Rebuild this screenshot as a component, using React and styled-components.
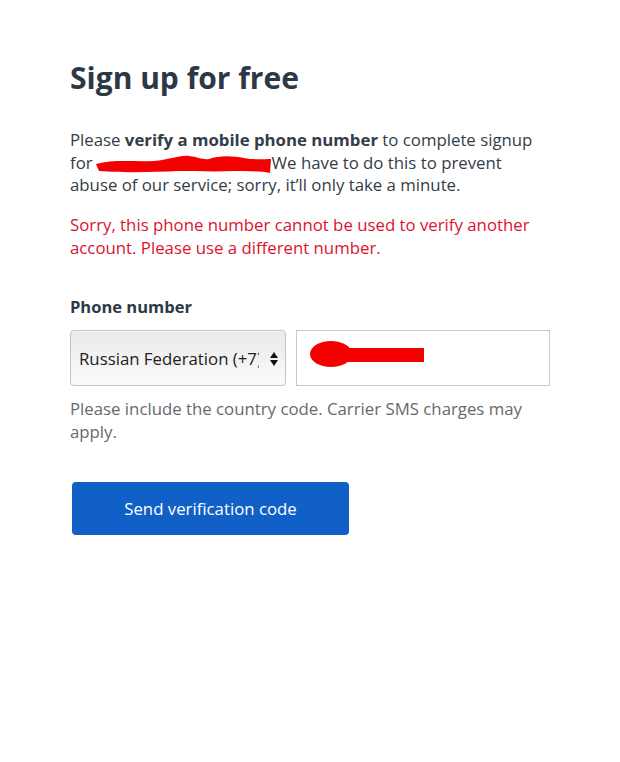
import React from 'react'
import styled, { createGlobalStyle } from 'styled-components'

const GlobalStyle = createGlobalStyle`
  body {
    margin: 0;
    background: #ffffff;
    font-family: "Open Sans", Lato, "Liberation Sans", sans-serif;
  }
`

const Page = styled.main`
  padding: 58px 70px 0 70px;
  width: 480px;
  color: #333d47;
`

const Title = styled.h1`
  margin: 0 0 31px 0;
  font-size: 30px;
  line-height: 40px;
  font-weight: 700;
  color: #2d3847;
`

const Text = styled.p`
  margin: 0 0 17.5px 0;
  font-size: 16.8px;
  line-height: 22.5px;
  color: ${({ $tone }) => ($tone === 'error' ? '#dc1230' : $tone === 'hint' ? '#66696d' : '#333d47')};
`

const Label = styled.label`
  display: block;
  margin-top: 36px;
  font-size: 16.5px;
  font-weight: 700;
  color: #2d3847;
`

const Row = styled.div`
  display: flex;
  gap: 10px;
  margin-top: 12px;
  margin-bottom: 12px;
`

const SelectBox = styled.div`
  position: relative;
  width: 216px;
  height: 56px;
  box-sizing: border-box;
  border: 1px solid #c4c4c4;
  border-radius: 4px;
  background: linear-gradient(#e9e9e9, #fbfbfb);
  box-shadow: inset 0 1px 0 #f4f4f4;
  overflow: hidden;
`

const Select = styled.select`
  appearance: none;
  border: none;
  background: transparent;
  width: 100%;
  height: 100%;
  padding: 0 26px 0 8px;
  font-family: inherit;
  font-size: 16.8px;
  color: #222;
`

const Arrows = styled.svg`
  position: absolute;
  right: 6px;
  top: 19px;
  pointer-events: none;
`

const PhoneBox = styled.div`
  position: relative;
  width: 254px;
  height: 56px;
  box-sizing: border-box;
  border: 1px solid #c8c8c8;
  background: #fff;
`

const PhoneInput = styled.input`
  border: none;
  width: 100%;
  height: 100%;
  box-sizing: border-box;
  padding: 0 12px;
  font-family: inherit;
  font-size: 16.8px;
  outline: none;
  background: transparent;
`

const Scribble = styled.svg`
  position: absolute;
  left: 12px;
  top: 8px;
  pointer-events: none;
`

const InlineScribble = styled.svg`
  display: inline-block;
  vertical-align: -5px;
  margin-left: 1px;
`

const Button = styled.button`
  margin-top: 21px;
  margin-left: 2px;
  width: 277px;
  height: 53px;
  border: none;
  border-radius: 4px;
  background: #1160c7;
  color: #fff;
  font-family: inherit;
  font-size: 16.8px;
`

export default function App() {
  return (
    <>
      <GlobalStyle />
      <Page>
        <Title>Sign up for free</Title>
        <Text>
          Please <strong>verify a mobile phone number</strong> to complete signup for
          <InlineScribble width="178" height="20" viewBox="0 0 178 20">
            <path d="M2 10 C20 5 40 8 60 7 C75 6 85 1 95 2 C105 3 108 6 115 5 C125 1 140 2 150 4 C160 6 170 5 177 5 L176 19 C165 17 150 17 140 17 C120 18 100 17 85 17 C60 18 30 19 5 17 Z" fill="#f40000" />
          </InlineScribble>
          We have to do this to prevent abuse of our service; sorry, it’ll only take a minute.
        </Text>
        <Text $tone="error">
          Sorry, this phone number cannot be used to verify another account. Please use a different number.
        </Text>
        <Label htmlFor="phone">Phone number</Label>
        <Row>
          <SelectBox>
            <Select defaultValue="ru">
              <option value="ru">Russian Federation (+7)</option>
            </Select>
            <Arrows width="10" height="18" viewBox="0 0 10 18">
              <path d="M5 2 L9 8 H1 Z" fill="#111" />
              <path d="M5 16 L9 10 H1 Z" fill="#111" />
            </Arrows>
          </SelectBox>
          <PhoneBox>
            <PhoneInput id="phone" type="tel" />
            <Scribble width="120" height="32" viewBox="0 0 120 32">
              <ellipse cx="22" cy="15" rx="21" ry="13" fill="#f40000" />
              <path d="M30 9 L115 9 L115 23 L30 23 Z" fill="#f40000" />
            </Scribble>
          </PhoneBox>
        </Row>
        <Text $tone="hint">
          Please include the country code. Carrier SMS charges may apply.
        </Text>
        <Button>Send verification code</Button>
      </Page>
    </>
  )
}
